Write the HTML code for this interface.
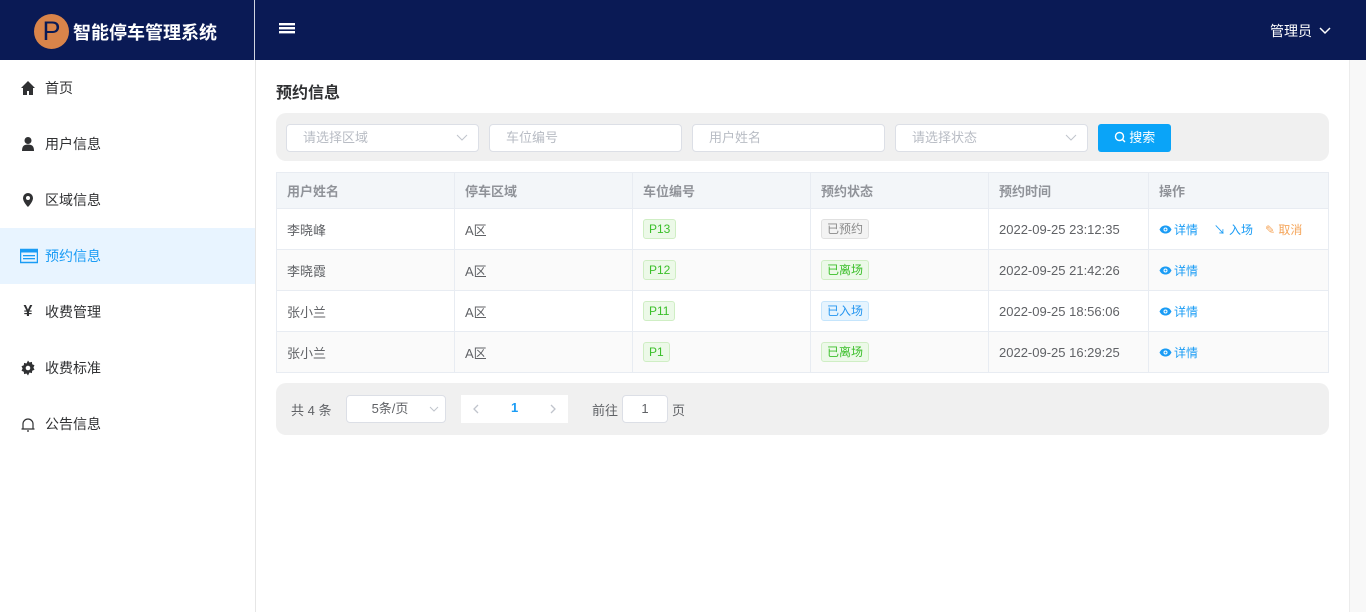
<!DOCTYPE html>
<html><head><meta charset="utf-8"><style>
*{margin:0;padding:0;box-sizing:border-box}
body{width:1366px;height:612px;overflow:hidden;font-family:"Liberation Sans","Noto Sans CJK SC",sans-serif;font-size:13px;color:#606266;background:#fff;position:relative}
.hdr{position:absolute;left:0;top:0;width:1366px;height:60px;background:#0a1a55}
.logo{position:absolute;left:0;top:0;width:255px;height:60px;border-right:1px solid #d0d4e0}
.logo .p{position:absolute;left:34px;top:14px;width:35px;height:35px;border-radius:50%;background:#d9844a;color:#0a1a55;font-size:27px;line-height:35px;text-align:center}
.logo .t{position:absolute;left:73px;top:19px;color:#fff;font-size:18px;font-weight:bold}
.side{position:absolute;left:0;top:60px;width:256px;height:552px;border-right:1px solid #e6e6e6}
.mi{height:56px;display:flex;align-items:center;padding-left:20px;font-size:14px;color:#303133}
.mi svg{width:16px;height:16px;margin-right:9px}
.mi.on{background:#e8f4ff;color:#1a9cf5}
.main{position:absolute;left:256px;top:60px;width:1093px}
.scroll{position:absolute;left:1349px;top:60px;width:17px;height:552px;background:#f8f8f8;border-left:1px solid #ececec}
h2{position:absolute;left:20px;top:19px;font-size:16px;color:#303133;font-weight:bold}
.bar{position:absolute;left:20px;top:53px;width:1053px;height:48px;background:#f0f0f0;border-radius:10px}
.inp{position:absolute;top:11px;width:193px;height:28px;background:#fff;border:1px solid #dcdfe6;border-radius:4px;color:#b8bcc4;padding-left:16px;line-height:26px;font-size:13px}
.btn{position:absolute;left:822px;top:11px;width:73px;height:28px;background:#0aa4f8;border-radius:3px;color:#fff;line-height:28px;text-align:center;font-size:13px}
table{position:absolute;left:20px;top:112px;border-collapse:collapse;width:1053px}
td,th{border:1px solid #e8ecf2;height:41px;padding-left:10px;text-align:left;font-size:13px;color:#606266}
th{height:36px;background:#f3f6f9;color:#909399;font-weight:bold}
tr.g td{background:#fafafa}
.tag{display:inline-block;height:20px;line-height:18px;padding:0 5px;border-radius:3px;border:1px solid;font-size:12px}
.gr{background:#ecf9e8;border-color:#cfeec4;color:#3bbf2a}
.gy{background:#f3f3f3;border-color:#e0e0e0;color:#8a8a8a}
.bl{background:#e6f4fe;border-color:#c5e5fc;color:#2495f0}
.a{color:#1a9cf5;margin-right:12px;font-size:12px}.o{color:#f5a55a;font-size:12px}
.eye{width:13px;height:9px;vertical-align:0;margin-right:2px}
.pg{position:absolute;left:20px;top:323px;width:1053px;height:52px;background:#f0f0f0;border-radius:10px}
.pg span{position:absolute;font-size:13px}
.box{position:absolute;background:#fff;border:1px solid #dcdfe6;border-radius:4px;height:28px;line-height:26px;text-align:center}
</style></head><body>
<div class="hdr">
<div class="logo"><div class="p">P</div><div class="t">智能停车管理系统</div></div>
<svg style="position:absolute;left:279px;top:22px" width="16" height="14"><rect y="1" width="16" height="2.4" fill="#fff"/><rect y="5" width="16" height="2.4" fill="#fff"/><rect y="9" width="16" height="2.4" fill="#fff"/></svg>
<div style="position:absolute;left:1270px;top:21px;color:#fff;font-size:14px">管理员 <svg width="12" height="10" style="margin-left:3px"><path d="M1 2l5 5 5-5" stroke="#fff" stroke-width="1.5" fill="none"/></svg></div>
</div>
<div class="side">
<div class="mi"><svg viewBox="0 0 16 16"><path d="M8 1L1 8h2v7h4v-4h2v4h4V8h2z" fill="#303133"/></svg>首页</div>
<div class="mi"><svg viewBox="0 0 16 16"><circle cx="8" cy="4.5" r="3.5" fill="#303133"/><path d="M2 15c0-5 2-6.5 6-6.5s6 1.5 6 6.5z" fill="#303133"/></svg>用户信息</div>
<div class="mi"><svg viewBox="0 0 16 16"><path d="M8 1a5 5 0 0 0-5 5c0 4 5 9 5 9s5-5 5-9a5 5 0 0 0-5-5zm0 7a2 2 0 1 1 0-4 2 2 0 0 1 0 4z" fill="#303133"/></svg>区域信息</div>
<div class="mi on"><svg viewBox="0 0 18 16" style="width:18px;margin-right:7px"><rect x="0.5" y="1.5" width="17" height="13" fill="none" stroke="#1a9cf5" stroke-width="1.5"/><rect x="0.5" y="1.5" width="17" height="3" fill="#1a9cf5"/><rect x="3" y="7" width="12" height="1.3" fill="#1a9cf5"/><rect x="3" y="10" width="12" height="1.3" fill="#1a9cf5"/></svg>预约信息</div>
<div class="mi"><span style="width:16px;margin-right:9px;font-weight:bold;font-size:16px;text-align:center">¥</span>收费管理</div>
<div class="mi"><svg viewBox="0 0 16 16"><path d="M8 0.5l1.5 2 2.4-.6.3 2.4 2.3 1-1.1 2.2 1.1 2.2-2.3 1-.3 2.4-2.4-.6L8 15.5l-1.5-2-2.4.6-.3-2.4-2.3-1L2.6 8.5 1.5 6.3l2.3-1 .3-2.4 2.4.6z" fill="#303133"/><circle cx="8" cy="8" r="2.3" fill="#fff"/></svg>收费标准</div>
<div class="mi"><svg viewBox="0 0 16 16"><path d="M3 13V8a5 5 0 0 1 10 0v5M1.5 13h13M7 15h2" stroke="#303133" stroke-width="1.2" fill="none"/></svg>公告信息</div>
</div>
<div class="main">
<h2>预约信息</h2>
<div class="bar">
<div class="inp" style="left:10px">请选择区域<svg style="position:absolute;right:10px;top:9px" width="12" height="8"><path d="M1 1l5 5 5-5" stroke="#c0c4cc" fill="none"/></svg></div>
<div class="inp" style="left:213px">车位编号</div>
<div class="inp" style="left:416px">用户姓名</div>
<div class="inp" style="left:619px">请选择状态<svg style="position:absolute;right:10px;top:9px" width="12" height="8"><path d="M1 1l5 5 5-5" stroke="#c0c4cc" fill="none"/></svg></div>
<div class="btn"><svg width="12" height="12" style="vertical-align:-1px"><circle cx="5.5" cy="5.5" r="4" stroke="#fff" stroke-width="1.4" fill="none"/><path d="M8.5 8.5l2.5 2.5" stroke="#fff" stroke-width="1.4"/></svg> 搜索</div>
</div>
<table>
<tr><th style="width:178px">用户姓名</th><th style="width:178px">停车区域</th><th style="width:178px">车位编号</th><th style="width:178px">预约状态</th><th style="width:160px">预约时间</th><th>操作</th></tr>
<tr><td>李晓峰</td><td>A区</td><td><span class="tag gr">P13</span></td><td><span class="tag gy">已预约</span></td><td>2022-09-25 23:12:35</td><td><span class="a"><svg class="eye" viewBox="0 0 13 9"><path d="M0.5 4.5C2 1.5 4 0.5 6.5 0.5s4.5 1 6 4c-1.5 3-3.5 4-6 4s-4.5-1-6-4z" fill="#1a9cf5"/><circle cx="6.5" cy="4.5" r="2" fill="#fff"/><circle cx="6.5" cy="4.5" r="1" fill="#1a9cf5"/></svg>详情</span> <span class="a">↘ 入场</span><span class="o">✎ 取消</span></td></tr>
<tr class="g"><td>李晓霞</td><td>A区</td><td><span class="tag gr">P12</span></td><td><span class="tag gr">已离场</span></td><td>2022-09-25 21:42:26</td><td><span class="a"><svg class="eye" viewBox="0 0 13 9"><path d="M0.5 4.5C2 1.5 4 0.5 6.5 0.5s4.5 1 6 4c-1.5 3-3.5 4-6 4s-4.5-1-6-4z" fill="#1a9cf5"/><circle cx="6.5" cy="4.5" r="2" fill="#fff"/><circle cx="6.5" cy="4.5" r="1" fill="#1a9cf5"/></svg>详情</span></td></tr>
<tr><td>张小兰</td><td>A区</td><td><span class="tag gr">P11</span></td><td><span class="tag bl">已入场</span></td><td>2022-09-25 18:56:06</td><td><span class="a"><svg class="eye" viewBox="0 0 13 9"><path d="M0.5 4.5C2 1.5 4 0.5 6.5 0.5s4.5 1 6 4c-1.5 3-3.5 4-6 4s-4.5-1-6-4z" fill="#1a9cf5"/><circle cx="6.5" cy="4.5" r="2" fill="#fff"/><circle cx="6.5" cy="4.5" r="1" fill="#1a9cf5"/></svg>详情</span></td></tr>
<tr class="g"><td>张小兰</td><td>A区</td><td><span class="tag gr">P1</span></td><td><span class="tag gr">已离场</span></td><td>2022-09-25 16:29:25</td><td><span class="a"><svg class="eye" viewBox="0 0 13 9"><path d="M0.5 4.5C2 1.5 4 0.5 6.5 0.5s4.5 1 6 4c-1.5 3-3.5 4-6 4s-4.5-1-6-4z" fill="#1a9cf5"/><circle cx="6.5" cy="4.5" r="2" fill="#fff"/><circle cx="6.5" cy="4.5" r="1" fill="#1a9cf5"/></svg>详情</span></td></tr>
</table>
<div class="pg">
<span style="left:15px;top:17px">共 4 条</span>
<div class="box" style="left:70px;top:12px;width:100px;padding-right:12px">5条/页<svg style="position:absolute;right:6px;top:10px" width="10" height="7"><path d="M1 1l4 4 4-4" stroke="#c0c4cc" fill="none"/></svg></div>
<div style="position:absolute;left:185px;top:12px;width:107px;height:28px;background:#fff"><svg style="position:absolute;left:12px;top:9px" width="6" height="10"><path d="M5 1L1 5l4 4" stroke="#c0c4cc" stroke-width="1.3" fill="none"/></svg><span style="left:50px;top:5px;color:#1a9cf5;font-weight:bold">1</span><svg style="position:absolute;left:89px;top:9px" width="6" height="10"><path d="M1 1l4 4-4 4" stroke="#c0c4cc" stroke-width="1.3" fill="none"/></svg></div>
<span style="left:316px;top:17px">前往</span>
<div class="box" style="left:346px;top:12px;width:46px">1</div>
<span style="left:396px;top:17px">页</span>
</div>
</div>
<div class="scroll"></div>
</body></html>
